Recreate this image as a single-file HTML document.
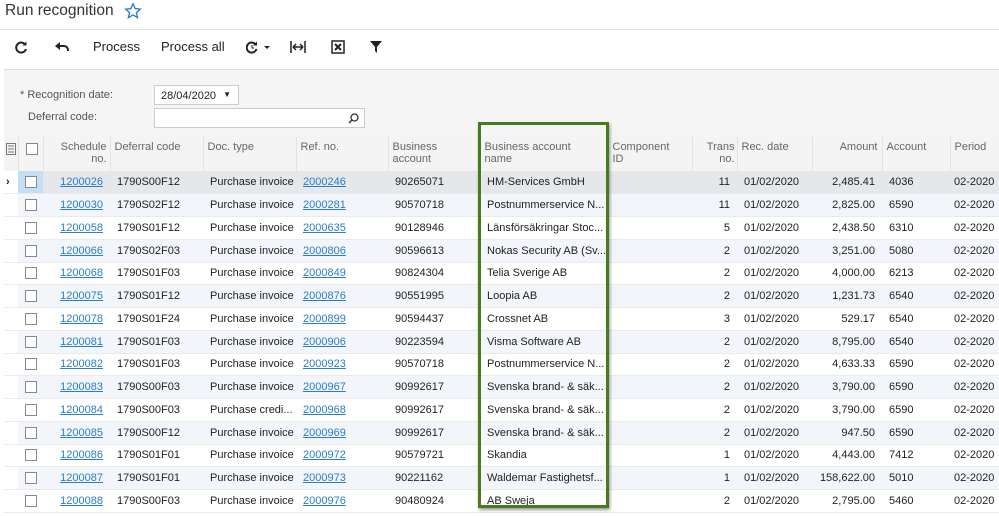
<!DOCTYPE html>
<html><head><meta charset="utf-8"><style>
body{margin:0;width:999px;height:516px;overflow:hidden;background:#fff;font-family:"Liberation Sans",Arial,sans-serif;position:relative}
.title{position:absolute;left:5px;top:2px;font-size:15.5px;color:#333}
.star{position:absolute;left:124px;top:2px}
.tbline{position:absolute;left:0;top:29px;width:999px;height:1px;background:#e3e3e3}
.tb{position:absolute;top:39px;font-size:13px;color:#222}
.panel{position:absolute;left:4px;top:69px;width:995px;height:68px;background:#f5f5f5;border-top:1px solid #ddd}
.lbl{position:absolute;font-size:11px;color:#555}
.inp{position:absolute;background:#fff;border:1px solid #ccc;font-size:11px;color:#222;box-sizing:border-box}
table{position:absolute;left:4px;top:137px;border-collapse:collapse;table-layout:fixed;width:995px;font-size:11px;color:#222}
th{height:34px;background:#f4f4f4;color:#666;font-weight:normal;vertical-align:top;text-align:left;padding:4px 4px 0;border-left:1px solid #e2e2e2;line-height:12px;box-sizing:border-box;font-size:11px;overflow:hidden;white-space:nowrap}
td{height:22.75px;padding:0 0 0 7px;box-sizing:border-box;white-space:nowrap;overflow:hidden;border-bottom:1px solid #eaeaea}
tr.a td{background:#f2f6fa}
tr.s td{background:#e5e7ea}
td.r{text-align:right;padding:0 7px 0 0}
td:last-child{padding-left:4px}
a{color:#2a7dc9;text-decoration:underline}
.cb{display:inline-block;width:10px;height:10px;border:1px solid #888;background:#fff;vertical-align:middle}
.green{position:absolute;left:478px;top:122px;width:125px;height:380px;border:3px solid #4a7a1e;box-shadow:1px 2px 3px rgba(0,0,0,.4)}
</style></head><body>
<div class="title">Run recognition</div>
<svg class="star" width="18" height="18" viewBox="0 0 24 24"><path d="M12 2.5l2.9 6.3 6.8.7-5.1 4.6 1.5 6.7L12 17.3l-6.1 3.5 1.5-6.7-5.1-4.6 6.8-.7z" fill="none" stroke="#2a7dc9" stroke-width="1.8"/></svg>
<div class="tbline"></div>
<svg style="position:absolute;left:15px;top:41px" width="13" height="13" viewBox="0 0 13 13"><path d="M10.5 4A5 5 0 1 0 11 8" fill="none" stroke="#222" stroke-width="2"/><path d="M7.5 4.5h4v-4z" fill="#222"/></svg>
<svg style="position:absolute;left:55px;top:42px" width="14" height="10" viewBox="0 0 14 10"><path d="M4 4h5a4 4 0 0 1 4 4v1" fill="none" stroke="#222" stroke-width="2"/><path d="M0 4l5-4v8z" fill="#222"/></svg>
<div class="tb" style="left:93px">Process</div>
<div class="tb" style="left:161px">Process all</div>
<svg style="position:absolute;left:246px;top:41px" width="28" height="13" viewBox="0 0 28 13"><path d="M10 4A5 5 0 1 0 10.5 8" fill="none" stroke="#222" stroke-width="2"/><path d="M7 4.5h4v-4z" fill="#222"/><path d="M6 4v3h2" stroke="#222" fill="none"/><path d="M18 5h6l-3 3z" fill="#222"/></svg>
<svg style="position:absolute;left:290px;top:41px" width="16" height="12" viewBox="0 0 16 12"><path d="M1 0v12M15 0v12M3 6h10M3 6l3-3M3 6l3 3M13 6l-3-3M13 6l-3 3" stroke="#222" stroke-width="1.5" fill="none"/></svg>
<svg style="position:absolute;left:331px;top:40px" width="14" height="14" viewBox="0 0 14 14"><rect x="1" y="1" width="12" height="12" fill="none" stroke="#222" stroke-width="1.5"/><path d="M4 4l6 6M10 4l-6 6" stroke="#222" stroke-width="2"/></svg>
<svg style="position:absolute;left:370px;top:41px" width="12" height="12" viewBox="0 0 12 12"><path d="M0 0h12L7 6v6L5 10V6z" fill="#222"/></svg>
<div class="panel"></div>
<div class="lbl" style="left:20px;top:89px">* Recognition date:</div>
<div class="inp" style="left:154px;top:85px;width:85px;height:20px;padding:4px 0 0 6px">28/04/2020<span style="position:absolute;right:7px;top:4px;font-size:8px">▼</span></div>
<div class="lbl" style="left:28px;top:111px">Deferral code:</div>
<div class="inp" style="left:154px;top:108px;width:211px;height:20px"><svg style="position:absolute;right:5px;top:4px" width="11" height="11" viewBox="0 0 11 11"><circle cx="6.5" cy="4.5" r="3.5" fill="none" stroke="#333" stroke-width="1.3"/><path d="M4 7l-3 3" stroke="#333" stroke-width="1.5"/></svg></div>
<table>
<colgroup><col style="width:14px"><col style="width:25px"><col style="width:67px"><col style="width:93px"><col style="width:93px"><col style="width:92px"><col style="width:92px"><col style="width:128px"><col style="width:84px"><col style="width:45px"><col style="width:75px"><col style="width:70px"><col style="width:68px"><col style="width:49px"></colgroup>
<tr><th style="padding:6px 0 0 2px;border-left:none"><svg width="10" height="12" viewBox="0 0 10 12"><rect x="0.5" y="0.5" width="9" height="11" fill="none" stroke="#777"/><path d="M2 3h6M2 6h6M2 9h6" stroke="#777"/></svg></th><th style="padding:6px 0 0 7px"><span class="cb"></span></th><th style="text-align:right;padding-right:3px">Schedule<br>no.</th><th>Deferral code</th><th>Doc. type</th><th>Ref. no.</th><th>Business<br>account</th><th>Business account<br>name</th><th>Component<br>ID</th><th style="text-align:right;padding-right:2px">Trans<br>no.</th><th>Rec. date</th><th style="text-align:right;padding-right:4px">Amount</th><th>Account</th><th>Period</th></tr>
<tr class="s"><td style="padding:0 0 0 2px;font-weight:bold;background:#fff">›</td><td style="background:#c5e0f5"><span class="cb"></span></td><td class="r"><a>1200026</a></td><td>1790S00F12</td><td>Purchase invoice</td><td><a>2000246</a></td><td>90265071</td><td>HM-Services GmbH</td><td></td><td class="r">11</td><td>01/02/2020</td><td class="r">2,485.41</td><td>4036</td><td>02-2020</td></tr>
<tr class="a"><td style="background:#fff"></td><td><span class="cb"></span></td><td class="r"><a>1200030</a></td><td>1790S02F12</td><td>Purchase invoice</td><td><a>2000281</a></td><td>90570718</td><td>Postnummerservice N...</td><td></td><td class="r">11</td><td>01/02/2020</td><td class="r">2,825.00</td><td>6590</td><td>02-2020</td></tr>
<tr><td></td><td><span class="cb"></span></td><td class="r"><a>1200058</a></td><td>1790S01F12</td><td>Purchase invoice</td><td><a>2000635</a></td><td>90128946</td><td>Länsförsäkringar Stoc...</td><td></td><td class="r">5</td><td>01/02/2020</td><td class="r">2,438.50</td><td>6310</td><td>02-2020</td></tr>
<tr class="a"><td style="background:#fff"></td><td><span class="cb"></span></td><td class="r"><a>1200066</a></td><td>1790S02F03</td><td>Purchase invoice</td><td><a>2000806</a></td><td>90596613</td><td>Nokas Security AB (Sv...</td><td></td><td class="r">2</td><td>01/02/2020</td><td class="r">3,251.00</td><td>5080</td><td>02-2020</td></tr>
<tr><td></td><td><span class="cb"></span></td><td class="r"><a>1200068</a></td><td>1790S01F03</td><td>Purchase invoice</td><td><a>2000849</a></td><td>90824304</td><td>Telia Sverige AB</td><td></td><td class="r">2</td><td>01/02/2020</td><td class="r">4,000.00</td><td>6213</td><td>02-2020</td></tr>
<tr class="a"><td style="background:#fff"></td><td><span class="cb"></span></td><td class="r"><a>1200075</a></td><td>1790S01F12</td><td>Purchase invoice</td><td><a>2000876</a></td><td>90551995</td><td>Loopia AB</td><td></td><td class="r">2</td><td>01/02/2020</td><td class="r">1,231.73</td><td>6540</td><td>02-2020</td></tr>
<tr><td></td><td><span class="cb"></span></td><td class="r"><a>1200078</a></td><td>1790S01F24</td><td>Purchase invoice</td><td><a>2000899</a></td><td>90594437</td><td>Crossnet AB</td><td></td><td class="r">3</td><td>01/02/2020</td><td class="r">529.17</td><td>6540</td><td>02-2020</td></tr>
<tr class="a"><td style="background:#fff"></td><td><span class="cb"></span></td><td class="r"><a>1200081</a></td><td>1790S01F03</td><td>Purchase invoice</td><td><a>2000906</a></td><td>90223594</td><td>Visma Software AB</td><td></td><td class="r">2</td><td>01/02/2020</td><td class="r">8,795.00</td><td>6540</td><td>02-2020</td></tr>
<tr><td></td><td><span class="cb"></span></td><td class="r"><a>1200082</a></td><td>1790S01F03</td><td>Purchase invoice</td><td><a>2000923</a></td><td>90570718</td><td>Postnummerservice N...</td><td></td><td class="r">2</td><td>01/02/2020</td><td class="r">4,633.33</td><td>6590</td><td>02-2020</td></tr>
<tr class="a"><td style="background:#fff"></td><td><span class="cb"></span></td><td class="r"><a>1200083</a></td><td>1790S00F03</td><td>Purchase invoice</td><td><a>2000967</a></td><td>90992617</td><td>Svenska brand- &amp; säk...</td><td></td><td class="r">2</td><td>01/02/2020</td><td class="r">3,790.00</td><td>6590</td><td>02-2020</td></tr>
<tr><td></td><td><span class="cb"></span></td><td class="r"><a>1200084</a></td><td>1790S00F03</td><td>Purchase credi...</td><td><a>2000968</a></td><td>90992617</td><td>Svenska brand- &amp; säk...</td><td></td><td class="r">2</td><td>01/02/2020</td><td class="r">3,790.00</td><td>6590</td><td>02-2020</td></tr>
<tr class="a"><td style="background:#fff"></td><td><span class="cb"></span></td><td class="r"><a>1200085</a></td><td>1790S00F12</td><td>Purchase invoice</td><td><a>2000969</a></td><td>90992617</td><td>Svenska brand- &amp; säk...</td><td></td><td class="r">2</td><td>01/02/2020</td><td class="r">947.50</td><td>6590</td><td>02-2020</td></tr>
<tr><td></td><td><span class="cb"></span></td><td class="r"><a>1200086</a></td><td>1790S01F01</td><td>Purchase invoice</td><td><a>2000972</a></td><td>90579721</td><td>Skandia</td><td></td><td class="r">1</td><td>01/02/2020</td><td class="r">4,443.00</td><td>7412</td><td>02-2020</td></tr>
<tr class="a"><td style="background:#fff"></td><td><span class="cb"></span></td><td class="r"><a>1200087</a></td><td>1790S01F01</td><td>Purchase invoice</td><td><a>2000973</a></td><td>90221162</td><td>Waldemar Fastighetsf...</td><td></td><td class="r">1</td><td>01/02/2020</td><td class="r">158,622.00</td><td>5010</td><td>02-2020</td></tr>
<tr><td></td><td><span class="cb"></span></td><td class="r"><a>1200088</a></td><td>1790S00F03</td><td>Purchase invoice</td><td><a>2000976</a></td><td>90480924</td><td>AB Sweja</td><td></td><td class="r">2</td><td>01/02/2020</td><td class="r">2,795.00</td><td>5460</td><td>02-2020</td></tr>
</table>
<div class="green"></div>
</body></html>
